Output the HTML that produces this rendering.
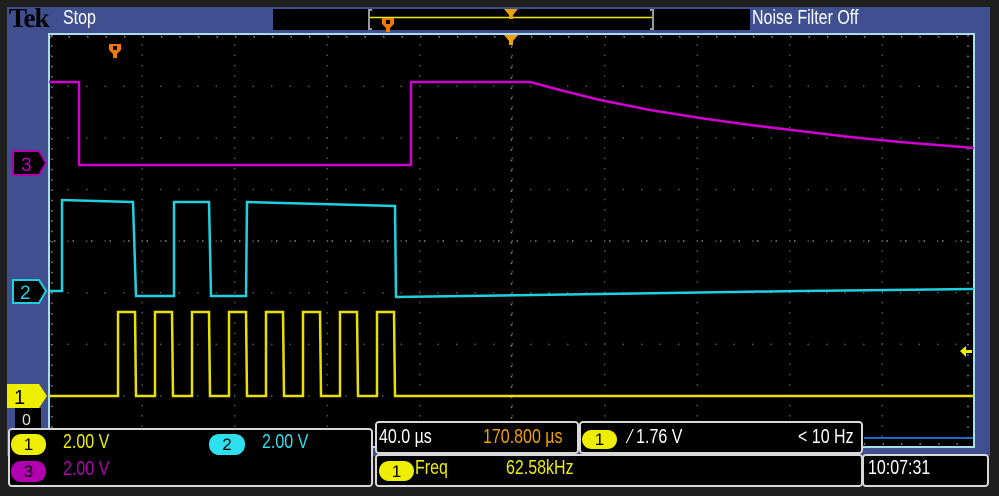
<!DOCTYPE html>
<html><head><meta charset="utf-8"><style>
body{margin:0;width:999px;height:496px;background:#1f1f1f;overflow:hidden;font-family:"Liberation Sans",sans-serif;position:relative}
.a{position:absolute}
.t{font-size:20px;transform:scaleX(.8);transform-origin:0 0;white-space:nowrap}
.badge{position:absolute;border-radius:10px;text-align:center;font-size:17px;color:#000;line-height:21px}
.box{position:absolute;background:#000;border:2px solid #d8d8d8;border-radius:4px;box-sizing:border-box}
</style></head><body>
<div class="a" style="left:7px;top:7px;width:983px;height:449px;background:#3f4f90"></div>
<div class="a" style="left:9px;top:3px;font-family:'Liberation Serif',serif;font-weight:bold;font-size:27px;color:#000;letter-spacing:-1px">Tek</div>
<div class="a t" style="left:63px;top:7px;color:#fff">Stop</div>
<div class="a" style="left:273px;top:9px;width:477px;height:21px;background:#000"></div>
<div class="a t" style="left:752px;top:7px;color:#fff">Noise Filter Off</div>
<svg class="a" style="left:0;top:0" width="999" height="496">
<g stroke="#999" stroke-width="2" fill="none"><path d="M372 10h-3v19h3M650 10h3v19h-3"/></g>
<line x1="370" y1="17.5" x2="652" y2="17.5" stroke="#ee0" stroke-width="1.5"/>
<path d="M382 18h12v6l-4 4v4h-4v-4l-4-4z" fill="#f07a00"/><path d="M386 20h4v4h-4z" fill="#000"/>
<path d="M504 9h14l-5 6v4h-4v-4z" fill="#f0a000"/>
<rect x="49" y="34" width="925" height="413" fill="#000" stroke="#a8dcf0" stroke-width="2"/>
<defs>
<pattern id="d" x="49" y="34" width="18.5" height="51.6" patternUnits="userSpaceOnUse"><rect x="0" y="0" width="1.5" height="1.5" fill="#555"/></pattern>
<pattern id="e" x="49" y="34" width="92.5" height="10.3" patternUnits="userSpaceOnUse"><rect x="0" y="0" width="1.5" height="1.5" fill="#555"/></pattern>
</defs>
<rect x="50" y="35" width="923" height="411" fill="url(#d)"/>
<rect x="50" y="35" width="923" height="411" fill="url(#e)"/>
<g stroke="#888" stroke-width="1.5">
<path d="M50 37h920M50 444h920" stroke-dasharray="1.5 17"/>
<path d="M52 35v412M968 35v412" stroke-dasharray="1.5 8.8"/>
<path d="M54 241h915" stroke-dasharray="1.5 17"/>
<path d="M511.5 36v410" stroke-dasharray="1.5 8.8"/>
</g>
<path d="M504 35h14l-5 6v4h-4v-4z" fill="#f0a000"/>
<path d="M109 44h12v6l-4 4v4h-4v-4l-4-4z" fill="#f07a00"/><path d="M113 46h4v4h-4z" fill="#000"/>
<polyline fill="none" stroke="#d000d0" stroke-width="2.5" points="49,82 79,82 79,165 411,165 411,82 530,82 560,90 600,100 650,110 700,118 750,125 800,131 850,137 900,142 974,148"/>
<polyline fill="none" stroke="#20d0e0" stroke-width="2.5" points="50,291 62,291 62,200 133,202 136,296 174,296 174,202 209,202 211,296 246,296 247,202 395,206 396,297 600,294 800,291 974,289"/>
<polyline fill="none" stroke="#e8e000" stroke-width="2.5" points="50,396 118,396 118,312 135,312 136,396 155,396 155,312 172,312 173,396 192,396 192,312 209,312 210,396 229,396 229,312 246,312 247,396 266,396 266,312 283,312 284,396 303,396 303,312 320,312 321,396 340,396 340,312 357,312 358,396 377,396 377,312 394,312 395,396 974,396"/>
<path d="M960 351l6-5v4h6v3h-6v4z" fill="#ee0"/>
<line x1="864" y1="438" x2="973" y2="438" stroke="#1e90ff" stroke-width="1.5"/>
<path d="M13 151h26l7 12-7 12h-26z" fill="#000" stroke="#b000b0" stroke-width="2"/>
<path d="M13 280h26l7 11-7 12h-26z" fill="#000" stroke="#20d0e0" stroke-width="2"/>
<path d="M7 384h32l8 12-8 12h-32z" fill="#ee0"/>
<rect x="15" y="408" width="26" height="20" fill="#000"/>
<text x="21" y="171" font-family="Liberation Sans" font-size="19" fill="#c000c0">3</text>
<text x="20" y="299" font-family="Liberation Sans" font-size="19" fill="#20d0e0">2</text>
<text x="14" y="404" font-family="Liberation Sans" font-size="20" fill="#000">1</text>
<text x="22" y="425" font-family="Liberation Sans" font-size="16" fill="#ddd">0</text>
</svg>
<div class="box" style="left:8px;top:428px;width:365px;height:59px"></div>
<div class="badge" style="left:11px;top:434px;width:35px;height:21px;background:#ee0">1</div>
<div class="a t" style="left:63px;top:431px;color:#ee0">2.00 V</div>
<div class="badge" style="left:209px;top:434px;width:36px;height:21px;background:#2ee0ee">2</div>
<div class="a t" style="left:262px;top:431px;color:#2ee0ee">2.00 V</div>
<div class="badge" style="left:11px;top:461px;width:35px;height:21px;background:#b000b0">3</div>
<div class="a t" style="left:63px;top:458px;color:#b000b0">2.00 V</div>
<div class="box" style="left:375px;top:421px;width:204px;height:33px"></div>
<div class="a t" style="left:379px;top:426px;color:#fff">40.0 µs</div>
<div class="a t" style="left:483px;top:426px;color:#f0a000">170.800 µs</div>
<div class="box" style="left:579px;top:421px;width:284px;height:33px"></div>
<div class="badge" style="left:582px;top:430px;width:35px;height:19px;background:#ee0;line-height:19px">1</div>
<div class="a t" style="left:629px;top:426px;color:#fff">⁄ 1.76 V</div>
<div class="a t" style="left:798px;top:426px;color:#fff">&lt; 10 Hz</div>
<div class="box" style="left:375px;top:454px;width:488px;height:33px"></div>
<div class="badge" style="left:379px;top:461px;width:35px;height:20px;background:#ee0">1</div>
<div class="a t" style="left:415px;top:457px;color:#ee0">Freq</div>
<div class="a t" style="left:506px;top:457px;color:#ee0">62.58kHz</div>
<div class="box" style="left:862px;top:454px;width:127px;height:33px"></div>
<div class="a t" style="left:868px;top:457px;color:#fff">10:07:31</div>
</body></html>
